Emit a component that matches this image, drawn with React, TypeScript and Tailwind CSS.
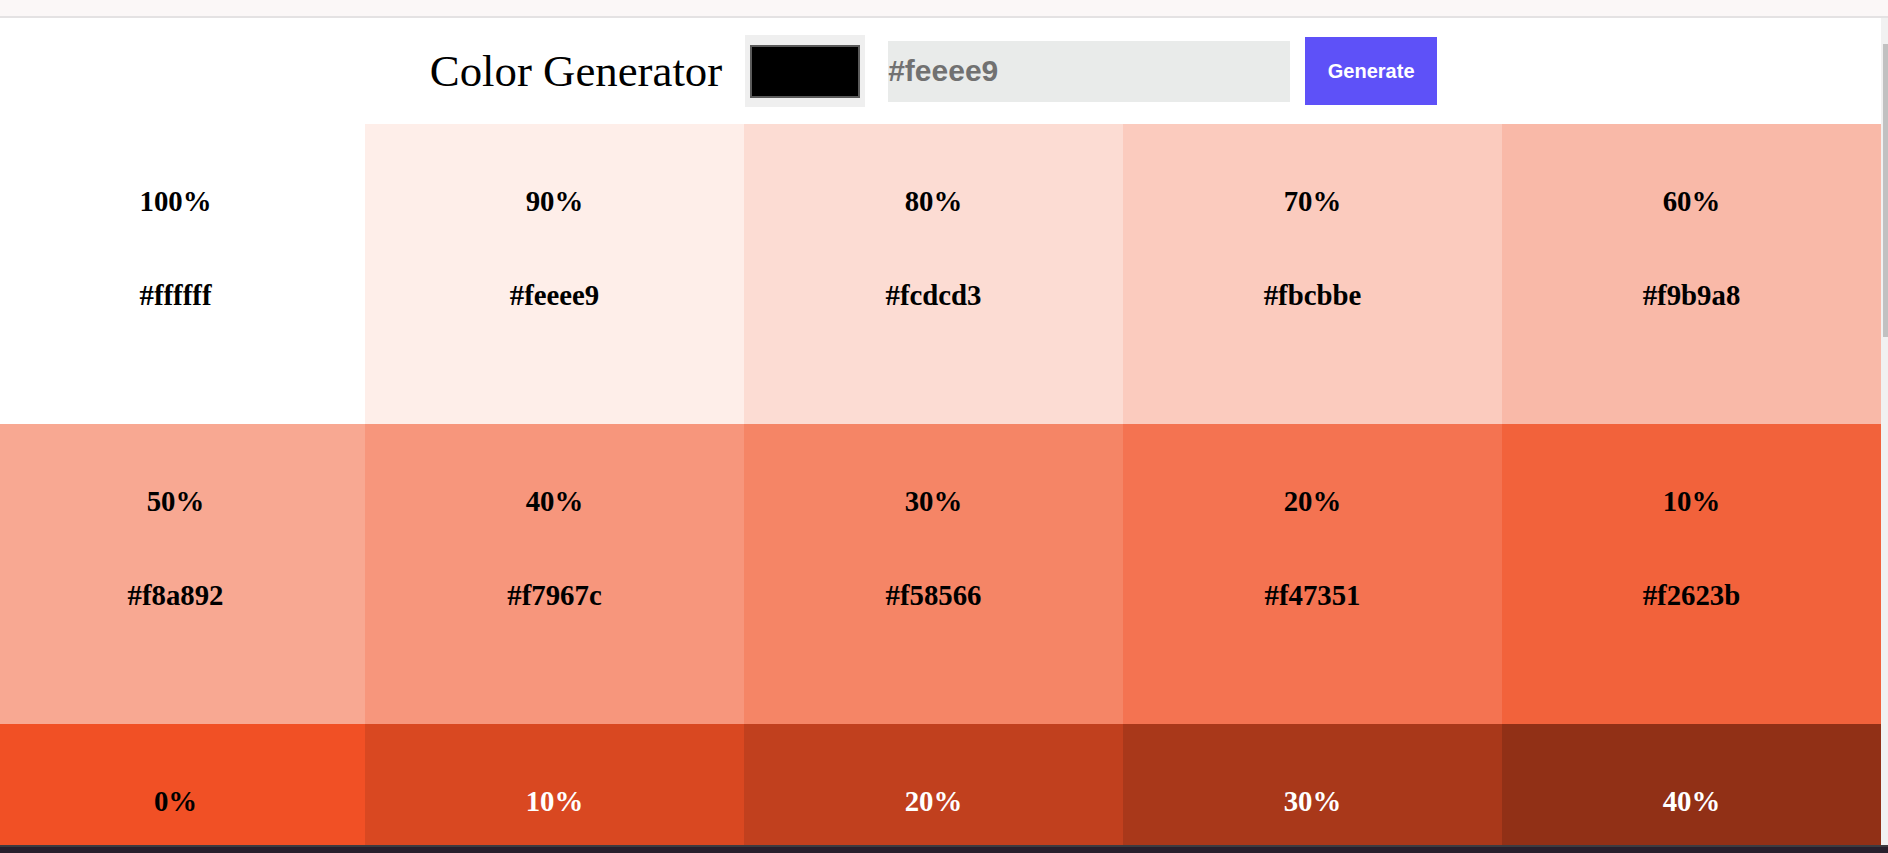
import React from "react";

// Tints and shades of #f15025
const swatches = [
  { pct: "100%", hex: "#ffffff", bg: "bg-[#ffffff]", light: false },
  { pct: "90%", hex: "#feeee9", bg: "bg-[#feeee9]", light: false },
  { pct: "80%", hex: "#fcdcd3", bg: "bg-[#fcdcd3]", light: false },
  { pct: "70%", hex: "#fbcbbe", bg: "bg-[#fbcbbe]", light: false },
  { pct: "60%", hex: "#f9b9a8", bg: "bg-[#f9b9a8]", light: false },
  { pct: "50%", hex: "#f8a892", bg: "bg-[#f8a892]", light: false },
  { pct: "40%", hex: "#f7967c", bg: "bg-[#f7967c]", light: false },
  { pct: "30%", hex: "#f58566", bg: "bg-[#f58566]", light: false },
  { pct: "20%", hex: "#f47351", bg: "bg-[#f47351]", light: false },
  { pct: "10%", hex: "#f2623b", bg: "bg-[#f2623b]", light: false },
  { pct: "0%", hex: "#f15025", bg: "bg-[#f15025]", light: false },
  { pct: "10%", hex: "#d94821", bg: "bg-[#d94821]", light: true },
  { pct: "20%", hex: "#c1401e", bg: "bg-[#c1401e]", light: true },
  { pct: "30%", hex: "#a9381a", bg: "bg-[#a9381a]", light: true },
  { pct: "40%", hex: "#913016", bg: "bg-[#913016]", light: true },
];

const serif = "font-['Liberation_Serif','Times_New_Roman',serif]";
const sans = "font-['Liberation_Sans',Arial,sans-serif]";

const Swatch: React.FC<{ s: (typeof swatches)[number] }> = ({ s }) => (
  <article
    className={`flex h-[300px] flex-col items-center pt-[61px] ${s.bg} ${
      s.light ? "text-white" : "text-black"
    }`}
  >
    <p className={`${serif} text-[28.8px] font-bold leading-[33px]`}>{s.pct}</p>
    <p className={`${serif} mt-[61px] text-[28.8px] font-bold leading-[33px]`}>
      {s.hex}
    </p>
  </article>
);

const Header = () => (
  <section className="flex h-[106px] items-center justify-center">
    <h3 className={`${serif} text-[44.8px] font-normal leading-[52px] text-black`}>
      Color Generator
    </h3>
    <div className="ml-[23px] flex h-[72px] w-[120px] items-center justify-center bg-[#efefef]">
      <div className="h-[53px] w-[110px] border-2 border-[#5b5b5b] bg-black" />
    </div>
    <input
      readOnly
      value="#feeee9"
      className={`${sans} ml-[23px] h-[61px] w-[402px] bg-[#e9ebea] px-0 text-[30px] font-bold text-[#717171] outline-none`}
    />
    <button
      className={`${sans} ml-[15px] h-[68px] w-[132px] bg-[#5e51f8] text-[20px] font-bold text-white`}
    >
      Generate
    </button>
  </section>
);

export default function App() {
  return (
    <div className="flex h-[853px] w-[1888px] flex-col overflow-hidden bg-white">
      {/* browser chrome edge */}
      <div className="h-[18px] shrink-0 border-b-2 border-[#e4e2e3] bg-[#fbf7f7]" />

      <div className="flex min-h-0 flex-1">
        <main className="w-[1881px] overflow-hidden">
          <div className="-ml-[14px] w-[1895px]">
            <Header />
            <section className="grid grid-cols-5">
              {swatches.map((s, i) => (
                <Swatch key={i} s={s} />
              ))}
            </section>
          </div>
        </main>
        {/* scrollbar */}
        <div className="w-[7px] shrink-0 bg-[#f1f1f1] pt-[26px] pl-[2px]">
          <div className="h-[293px] w-[5px] bg-[#c1c1c1]" />
        </div>
      </div>

      {/* taskbar edge */}
      <div className="h-[8px] shrink-0 border-t-2 border-[#3d3b40] bg-[#271f2c]" />
    </div>
  );
}
